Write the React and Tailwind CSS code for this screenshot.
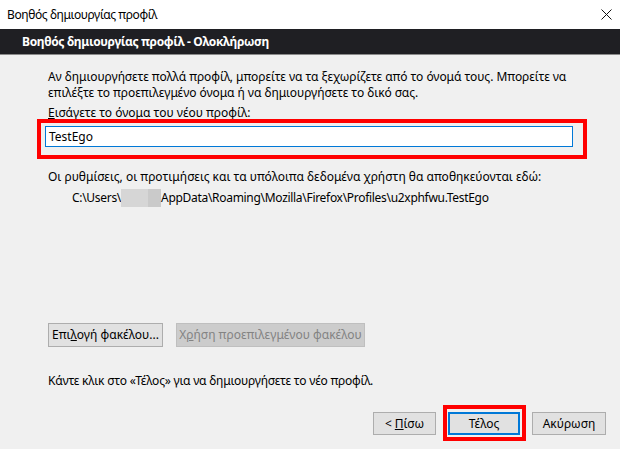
import React from 'react';

function WinButton({ children, className = '', disabled = false, focused = false }) {
  let look = 'bg-[#e1e1e1] border border-[#adadad] text-black';
  if (disabled) look = 'bg-[#cccccc] border border-[#bfbfbf] text-[#838383]';
  if (focused) look = 'bg-[#e1e1e1] border-2 border-[#0078d7] text-black';
  return (
    <button
      type="button"
      className={`flex items-center justify-center text-[12px] leading-none ${look} ${className}`}
    >
      {children}
    </button>
  );
}

export default function App() {
  return (
    <div
      className="relative w-[620px] h-[449px] overflow-hidden bg-[#f0f0f0] flex flex-col text-black"
      style={{ fontFamily: '"Noto Sans", "Open Sans", sans-serif' }}
    >
      {/* window title bar */}
      <div className="h-[29px] bg-white flex items-center justify-between pl-[7px] pr-[8px] shrink-0">
        <span className="text-[12px] tracking-[-0.4px]">Βοηθός δημιουργίας προφίλ</span>
        <svg width="11" height="11" viewBox="0 0 11 11">
          <path d="M0.5 0.5 L10.5 10.5 M10.5 0.5 L0.5 10.5" stroke="#111" strokeWidth="1" fill="none" />
        </svg>
      </div>

      {/* wizard page header */}
      <div className="h-[26px] bg-[#1f1f23] border-b border-[#8a8a8a] flex items-center pl-[22px] shrink-0">
        <span className="text-[12px] font-bold text-white tracking-[-0.35px]">
          Βοηθός δημιουργίας προφίλ - Ολοκλήρωση
        </span>
      </div>

      <div className="flex-1 flex flex-col pl-[48px] pr-[20px] pt-[14px]">
        <p className="text-[12px] leading-[16px] tracking-[-0.05px]">
          Αν δημιουργήσετε πολλά προφίλ, μπορείτε να τα ξεχωρίζετε από το όνομά τους. Μπορείτε να
          <br />
          επιλέξτε το προεπιλεγμένο όνομα ή να δημιουργήσετε το δικό σας.
        </p>

        <label className="mt-[4px] text-[12px] leading-[16px]">
          <span className="underline">Ε</span>ισάγετε το όνομα του νέου προφίλ:
        </label>

        <div className="mt-[5px] -ml-[3px] w-[528px] h-[21px] bg-white border border-[#0078d7] flex items-center px-[3px] text-[12px]">
          TestEgo
        </div>

        <p className="mt-[22px] text-[12px] leading-[16px]">
          Οι ρυθμίσεις, οι προτιμήσεις και τα υπόλοιπα δεδομένα χρήστη θα αποθηκεύονται εδώ:
        </p>
        <div className="mt-[4px] pl-[24px] flex items-center text-[12px] leading-[18px] tracking-[-0.3px]">
          <span>C:\Users\</span>
          <span className="inline-block w-[27px] h-[18px] bg-[#d6d6d6]" />
          <span className="inline-block w-[13px] h-[18px] bg-[#cacaca]" />
          <span>AppData\Roaming\Mozilla\Firefox\Profiles\u2xphfwu.TestEgo</span>
        </div>

        <div className="mt-[116px] flex gap-[13px]">
          <WinButton className="w-[115px] h-[24px]">
            Επι<span className="underline">λ</span>ογή φακέλου...
          </WinButton>
          <WinButton disabled className="w-[189px] h-[24px]">
            Χ<span className="underline">ρ</span>ήση προεπιλεγμένου φακέλου
          </WinButton>
        </div>

        <p className="mt-[26px] text-[12px] leading-[16px] tracking-[-0.22px]">
          Κάντε κλικ στο «Τέλος» για να δημιουργήσετε το νέο προφίλ.
        </p>

        <div className="mt-auto mb-[14px] flex justify-end gap-[12px] -mr-[6px]">
          <WinButton className="w-[63px] h-[23px]">
            &lt; <span className="underline ml-[3px]">Π</span>ίσω
          </WinButton>
          <WinButton focused className="w-[72px] h-[23px]">
            Τέλος
          </WinButton>
          <WinButton className="w-[74px] h-[23px]">Ακύρωση</WinButton>
        </div>
      </div>

      {/* red highlight annotations */}
      <div className="absolute left-[37px] top-[119px] w-[550px] h-[40px] border-4 border-[#ff0000] pointer-events-none" />
      <div className="absolute left-[443px] top-[405px] w-[83px] h-[36px] border-4 border-[#ff0000] pointer-events-none" />
    </div>
  );
}
